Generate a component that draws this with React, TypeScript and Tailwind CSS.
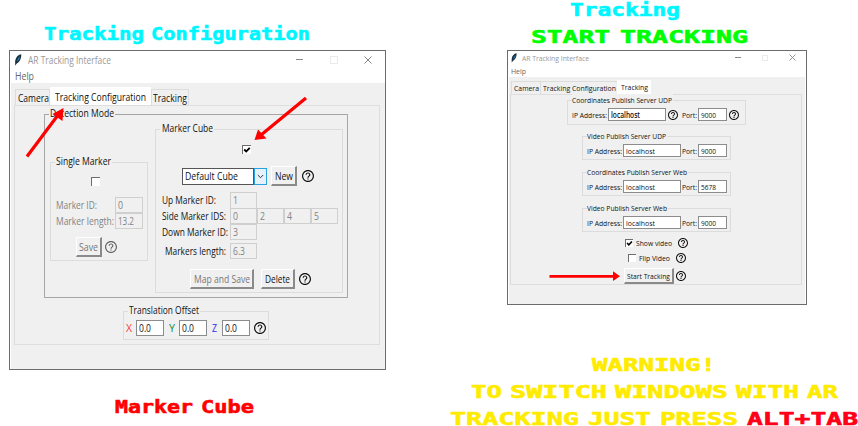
import { useLayoutEffect, useRef, type ReactNode } from "react";
import clsx from "clsx";

/** Single-line text stretched or squeezed to the width of its box. */
function Fit({ className, children }: { className: string; children: ReactNode }) {
  const box = useRef<HTMLSpanElement>(null);
  const text = useRef<HTMLSpanElement>(null);
  useLayoutEffect(() => {
    if (!box.current || !text.current) return;
    text.current.style.transform = `scaleX(${box.current.offsetWidth / text.current.getBoundingClientRect().width})`;
  }, []);
  return (
    <span ref={box} className={clsx("block shrink-0 leading-none whitespace-nowrap", className)}>
      <span ref={text} className="inline-block origin-left align-top">{children}</span>
    </span>
  );
}

function HelpIcon({ className }: { className: string }) {
  return (
    <svg viewBox="2 2 20 20" fill="currentColor" className={clsx("shrink-0", className)}>
      <path d="M11 18h2v-2h-2v2zm1-16C6.48 2 2 6.48 2 12s4.48 10 10 10 10-4.48 10-10S17.52 2 12 2zm0 18c-4.41 0-8-3.59-8-8s3.59-8 8-8 8 3.59 8 8-3.59 8-8 8zm0-14c-2.21 0-4 1.79-4 4h2c0-1.1.9-2 2-2s2 .9 2 2c0 2-3 1.75-3 5h2c0-2.25 3-2.5 3-5 0-2.21-1.79-4-4-4z" />
    </svg>
  );
}

function Feather({ className }: { className: string }) {
  return (
    <svg viewBox="0 0 8 13" className={clsx("shrink-0", className)}>
      <path d="M7.500 .3C4 .6 1.200 4 .9 8.500L1 12.700 2.400 10.500C5.600 9 7.800 5 7.500 .3Z" fill="#17303f" />
      <path d="M6 2.500C4.500 3.800 3.200 6 2.900 8.300 4.700 7 5.900 5.200 6 2.500Z" fill="#2f7fb5" />
    </svg>
  );
}

function Group({ className, label, labelClass, children }: { className: string; label: string; labelClass: string; children: ReactNode }) {
  return (
    <section className={clsx("relative shrink-0 border", className)}>
      <div className="absolute -top-[7px] left-[4px] bg-[#f0f0f0] px-px">
        <Fit className={labelClass}>{label}</Fit>
      </div>
      {children}
    </section>
  );
}

function Entry({ className, value, textClass }: { className: string; value: string; textClass: string }) {
  return (
    <div className={clsx("flex shrink-0 items-center border pl-[2px]", className)}>
      <Fit className={textClass}>{value}</Fit>
    </div>
  );
}

function Button({ className, label, textClass }: { className: string; label: string; textClass: string }) {
  return (
    <div className={clsx("flex shrink-0 items-center justify-center border-t border-r-2 border-b-2 border-l border-t-white border-r-[#8a8a8a] border-b-[#8a8a8a] border-l-white bg-[#f0f0f0]", className)}>
      <Fit className={textClass}>{label}</Fit>
    </div>
  );
}

function Check({ className, checked }: { className: string; checked?: boolean }) {
  return (
    <div className={clsx("shrink-0 border-t border-l border-[#6e6e6e] bg-white", className)}>
      {checked && (
        <svg viewBox="0 0 8 8" className="size-full" fill="none" stroke="#000" strokeWidth="1.800">
          <path d="M1.200 3.500 3.200 5.500 6.800 1.800" />
        </svg>
      )}
    </div>
  );
}

const disabled = "border-[#cfcfcf] text-[#838383]";
const field = "border-[#8c8c8c] bg-white";

function ConfigurationWindow() {
  return (
    <div className="relative flex h-[320px] w-[377px] flex-col border border-[#6c6c6c] bg-white text-[10px] text-[#111]">
      <div className="flex h-[17px] shrink-0 items-center text-[#999]">
        <Feather className="ml-[4px] h-[12px] w-[8px]" />
        <Fit className="ml-[6px] w-[83px]">AR Tracking Interface</Fit>
        <div className="ml-[185px] h-px w-[7px] bg-[#888]" />
        <div className="ml-[27px] size-[8px] border border-[#eaeaea]" />
        <svg viewBox="0 0 8 8" className="ml-[26px] size-[8px]" stroke="#888"><path d="M.5.5l7 7m0-7l-7 7" /></svg>
      </div>
      <div className="flex h-[15px] shrink-0 items-center pt-px pl-[5px] text-[#666]">
        <Fit className="w-[19px]">Help</Fit>
      </div>
      <div className="ml-px flex flex-1 flex-col bg-[#f0f0f0] pl-[3px]">
        <div className="flex h-[22px] shrink-0 items-end pl-px">
          <div className="flex h-[16px] w-[35px] items-center justify-center border border-b-0 border-[#dcdcdc]"><Fit className="ml-px w-[31px]">Camera</Fit></div>
          <div className="flex h-[18px] w-[101px] items-center justify-center bg-white pt-px"><Fit className="w-[91px]">Tracking Configuration</Fit></div>
          <div className="flex h-[16px] w-[38px] items-center justify-center border border-b-0 border-[#dcdcdc]"><Fit className="w-[34px]">Tracking</Fit></div>
        </div>
        <div className="flex h-[240px] w-[366px] shrink-0 flex-col border border-[#dedede]">
          <Group className="mt-[8px] ml-[29px] flex h-[184px] w-[304px] items-start border-[#a6a6a6]" label="Detection Mode" labelClass="w-[64px]">
            <Group className="mt-[47px] ml-[5px] h-[99px] w-[98px] border-[#dcdcdc]" label="Single Marker" labelClass="w-[55px]">
              <Check className="mt-[14px] ml-[40px] size-[9px]" />
              <div className="mt-[11px] flex h-[16px] items-center pl-[5px] text-[#838383]">
                <div className="w-[59px]"><Fit className="w-[41px]">Marker ID:</Fit></div>
                <Entry className={clsx("h-[16px] w-[28px]", disabled)} value="0" textClass="w-[5px]" />
              </div>
              <div className="flex h-[16px] items-center pl-[5px] text-[#838383]">
                <div className="w-[59px]"><Fit className="w-[58px]">Marker length:</Fit></div>
                <Entry className={clsx("h-[16px] w-[28px]", disabled)} value="13.2" textClass="w-[16px]" />
              </div>
              <div className="mt-[8px] flex h-[20px] items-center pl-[25px] text-[#777]">
                <Button className="h-[20px] w-[26px]" label="Save" textClass="w-[19px]" />
                <HelpIcon className="ml-[3px] size-[12px] text-[#666]" />
              </div>
            </Group>
            <Group className="mt-[14px] ml-[7px] h-[164px] w-[188px] border-[#dcdcdc]" label="Marker Cube" labelClass="ml-px w-[51px]">
              <Check className="mt-[15px] ml-[86px] size-[9px]" checked />
              <div className="mt-[12px] flex h-[20px] items-center pl-[26px]">
                <div className="flex h-[17px] w-[85px] shrink-0 items-stretch">
                  <div className="flex w-[72px] items-center border border-[#555] bg-white pl-[2px]"><Fit className="w-[53px]">Default Cube</Fit></div>
                  <div className="flex w-[13px] items-center justify-center border border-[#29a0e0] bg-[#e5f1fb]">
                    <svg viewBox="0 0 7 5" className="h-[5px] w-[7px]" fill="none" stroke="#333"><path d="M.8 1 3.500 3.700 6.200 1" /></svg>
                  </div>
                </div>
                <Button className="ml-[4px] h-[20px] w-[26px]" label="New" textClass="w-[18px]" />
                <HelpIcon className="ml-[5px] size-[12px]" />
              </div>
              <div className="mt-[6px] flex h-[16px] items-center pl-[6px]">
                <div className="w-[68px]"><Fit className="w-[54px]">Up Marker ID:</Fit></div>
                <Entry className={clsx("h-[17px] w-[27px]", disabled)} value="1" textClass="w-[5px]" />
              </div>
              <div className="flex h-[16px] items-center pl-[6px]">
                <div className="w-[68px]"><Fit className="w-[64px]">Side Marker IDS:</Fit></div>
                {["0", "2", "4", "5"].map((v) => (
                  <Entry key={v} className={clsx("h-[16px] w-[27px]", disabled)} value={v} textClass="w-[5px]" />
                ))}
              </div>
              <div className="flex h-[16px] items-center pl-[6px]">
                <div className="w-[68px]"><Fit className="w-[66px]">Down Marker ID:</Fit></div>
                <Entry className={clsx("h-[16px] w-[27px]", disabled)} value="3" textClass="w-[5px]" />
              </div>
              <div className="mt-[3px] flex h-[16px] items-center pl-[6px]">
                <div className="w-[68px] pl-[3px]"><Fit className="w-[61px]">Markers length:</Fit></div>
                <Entry className={clsx("h-[16px] w-[27px]", disabled)} value="6.3" textClass="w-[12px]" />
              </div>
              <div className="mt-[10px] flex h-[20px] items-center pl-[34px]">
                <Button className="h-[20px] w-[64px] text-[#777]" label="Map and Save" textClass="w-[56px]" />
                <Button className="ml-[7px] h-[20px] w-[34px]" label="Delete" textClass="w-[25px]" />
                <HelpIcon className="ml-[4px] size-[12px]" />
              </div>
            </Group>
          </Group>
          <Group className="mt-[13px] ml-[108px] h-[29px] w-[146px] border-[#dcdcdc]" label="Translation Offset" labelClass="w-[70px]">
            <div className="mt-[8px] flex h-[16px] items-center pl-[2px]">
              <div className="w-[10px] text-[#ff3b3b]"><Fit className="w-[6px]">X</Fit></div>
              <Entry className={clsx("h-[16px] w-[28px]", field)} value="0.0" textClass="w-[12px]" />
              <div className="ml-[5px] w-[10px] text-[#118a3c]"><Fit className="w-[6px]">Y</Fit></div>
              <Entry className={clsx("h-[16px] w-[28px]", field)} value="0.0" textClass="w-[12px]" />
              <div className="ml-[5px] w-[10px] text-[#2b2bf0]"><Fit className="w-[5px]">Z</Fit></div>
              <Entry className={clsx("h-[16px] w-[28px]", field)} value="0.0" textClass="w-[12px]" />
              <HelpIcon className="ml-[4px] size-[12px]" />
            </div>
          </Group>
        </div>
      </div>
      <svg viewBox="9 50 377 320" className="pointer-events-none absolute -top-px -left-px h-[320px] w-[377px]" fill="#f00" stroke="#f00">
        <path d="M27 156.500 58 115" strokeWidth="3.200" />
        <path d="M63.500 108 52.500 114 62.500 121Z" stroke="none" />
        <path d="M306 98 261 135" strokeWidth="3.200" />
        <path d="M254.500 140 258 129.500 266.500 138.500Z" stroke="none" />
      </svg>
    </div>
  );
}

function ServerRow({ port }: { port: string }) {
  return (
    <div className="mt-[7px] flex h-[13px] items-center pl-[4px]">
      <div className="w-[36px]"><Fit className="w-[35px]">IP Address:</Fit></div>
      <Entry className={clsx("h-[13px] w-[58px]", field)} value="localhost" textClass="w-[29px]" />
      <div className="ml-px w-[16px]"><Fit className="w-[15px]">Port:</Fit></div>
      <Entry className={clsx("h-[13px] w-[29px]", field)} value={port} textClass="w-[15px]" />
    </div>
  );
}

function TrackingWindow() {
  return (
    <div className="relative flex h-[255px] w-[300px] flex-col border border-[#6c6c6c] bg-white text-[8px] text-[#111]">
      <div className="flex h-[13px] shrink-0 items-center text-[#999]">
        <Feather className="ml-[3px] h-[10px] w-[6px]" />
        <Fit className="ml-[5px] w-[67px]">AR Tracking Interface</Fit>
        <div className="ml-[146px] h-px w-[6px] bg-[#888]" />
        <div className="ml-[21px] size-[6px] border border-[#eaeaea]" />
        <svg viewBox="0 0 7 7" className="ml-[21px] size-[7px]" stroke="#888" strokeWidth=".9"><path d="M.5.5l6 6m0-6l-6 6" /></svg>
      </div>
      <div className="flex h-[13px] shrink-0 items-center pl-[3px] text-[#666]"><Fit className="w-[15px]">Help</Fit></div>
      <div className="mx-px flex flex-1 flex-col bg-[#f0f0f0] pl-px">
        <div className="flex h-[17px] shrink-0 items-end pl-px">
          <div className="flex h-[13px] w-[30px] items-center justify-center border border-b-0 border-[#dcdcdc]"><Fit className="w-[25px]">Camera</Fit></div>
          <div className="flex h-[13px] w-[76px] items-center justify-center border-t border-[#dcdcdc]"><Fit className="w-[73px]">Tracking Configuration</Fit></div>
          <div className="flex h-[14px] w-[34px] items-center justify-center bg-white"><Fit className="w-[27px]">Tracking</Fit></div>
        </div>
        <div className="flex h-[191px] w-[292px] shrink-0 flex-col border border-[#dedede]">
          <Group className="mt-[5px] ml-[56px] h-[25px] w-[179px] border-[#dcdcdc]" label="Coordinates Publish Server UDP" labelClass="mt-[2px] w-[100px] -ml-px">
            <div className="mt-[7px] flex h-[13px] items-center pl-[4px]">
              <div className="w-[36px]"><Fit className="w-[35px]">IP Address:</Fit></div>
              <Entry className={clsx("h-[13px] w-[58px]", field)} value="localhost" textClass="w-[29px] font-semibold" />
              <HelpIcon className="ml-[2px] size-[10px]" />
              <div className="ml-[4px] w-[16px]"><Fit className="w-[15px]">Port:</Fit></div>
              <Entry className={clsx("h-[13px] w-[29px]", field)} value="9000" textClass="w-[15px]" />
              <HelpIcon className="ml-[2px] size-[10px]" />
            </div>
          </Group>
          <Group className="mt-[11px] ml-[71px] h-[24px] w-[149px] border-[#dcdcdc]" label="Video Publish Server UDP" labelClass="mt-[2px] w-[79px] -ml-px">
            <ServerRow port="9000" />
          </Group>
          <Group className="mt-[12px] ml-[71px] h-[24px] w-[149px] border-[#dcdcdc]" label="Coordinates Publish Server Web" labelClass="mt-[2px] w-[100px] -ml-px">
            <ServerRow port="5678" />
          </Group>
          <Group className="mt-[12px] ml-[71px] h-[24px] w-[149px] border-[#dcdcdc]" label="Video Publish Server Web" labelClass="mt-[2px] w-[80px] -ml-px">
            <ServerRow port="9000" />
          </Group>
          <div className="mt-[5px] flex h-[11px] items-center pl-[114px]">
            <Check className="size-[8px]" checked />
            <Fit className="ml-[3px] w-[36px]">Show video</Fit>
            <HelpIcon className="ml-[6px] size-[10px]" />
          </div>
          <div className="mt-[4px] flex h-[11px] items-center pl-[117px]">
            <Check className="size-[8px]" />
            <Fit className="ml-[3px] w-[31px]">Flip Video</Fit>
            <HelpIcon className="ml-[6px] size-[10px]" />
          </div>
          <div className="mt-[5px] flex h-[16px] items-center pl-[113px]">
            <Button className="h-[16px] w-[50px]" label="Start Tracking" textClass="w-[43px]" />
            <HelpIcon className="ml-[2px] size-[10px]" />
          </div>
        </div>
      </div>
      <svg viewBox="549 271 72 10" className="pointer-events-none absolute top-[220px] left-[41px] h-[10px] w-[72px]">
        <path d="M549.500 275H613V271.200L620 276.300 613 281V277.800H549.500Z" fill="#f00" />
      </svg>
    </div>
  );
}

const pixel = "font-['DejaVu_Sans_Mono',monospace] text-[18px] font-bold [-webkit-text-stroke:0.6px_currentColor]";

export default function App() {
  return (
    <main className="flex h-[426px] w-[858px] overflow-hidden bg-white font-['Open_Sans','Noto_Sans',sans-serif]">
      <div className="flex w-[450px] shrink-0 flex-col pl-[9px]">
        <h1 className={clsx("flex h-[50px] shrink-0 gap-[7px] pt-[25px] pl-[35px] text-[#00f6ff]", pixel)}>
          <Fit className="w-[100px]">Tracking</Fit>
          <Fit className="w-[159px]">Configuration</Fit>
        </h1>
        <ConfigurationWindow />
        <p className={clsx("mt-[28px] flex gap-[8px] pl-[106px] text-[#f00]", pixel)}>
          <Fit className="w-[78px]">Marker</Fit>
          <Fit className="w-[53px]">Cube</Fit>
        </p>
      </div>
      <div className="flex w-[408px] shrink-0 flex-col">
        <div className={clsx("h-[50px] shrink-0 pt-px", pixel)}>
          <h1 className="pl-[120px] text-[#00f6ff]"><Fit className="w-[110px]">Tracking</Fit></h1>
          <h2 className="mt-[9px] flex gap-[10px] pl-[81px] text-[#0f0]">
            <Fit className="w-[79px]">START</Fit>
            <Fit className="w-[128px]">TRACKING</Fit>
          </h2>
        </div>
        <div className="pl-[57px]"><TrackingWindow /></div>
        <div className={clsx("mt-[51px] flex flex-col gap-[9px] text-[#ffeb00]", pixel)}>
          <div className="pl-[142px]"><Fit className="w-[124px]">WARNING!</Fit></div>
          <div className="flex gap-[8px] pl-[21px]">
            <Fit className="w-[31px]">TO</Fit>
            <Fit className="w-[97px]">SWITCH</Fit>
            <Fit className="w-[113px]">WINDOWS</Fit>
            <Fit className="w-[63px]">WITH</Fit>
            <Fit className="w-[31px]">AR</Fit>
          </div>
          <div className="flex gap-[9px]">
            <Fit className="w-[129px]">TRACKING</Fit>
            <Fit className="w-[63px]">JUST</Fit>
            <Fit className="w-[78px]">PRESS</Fit>
            <Fit className="w-[111px] text-[#ff0018]">ALT+TAB</Fit>
          </div>
        </div>
      </div>
    </main>
  );
}
